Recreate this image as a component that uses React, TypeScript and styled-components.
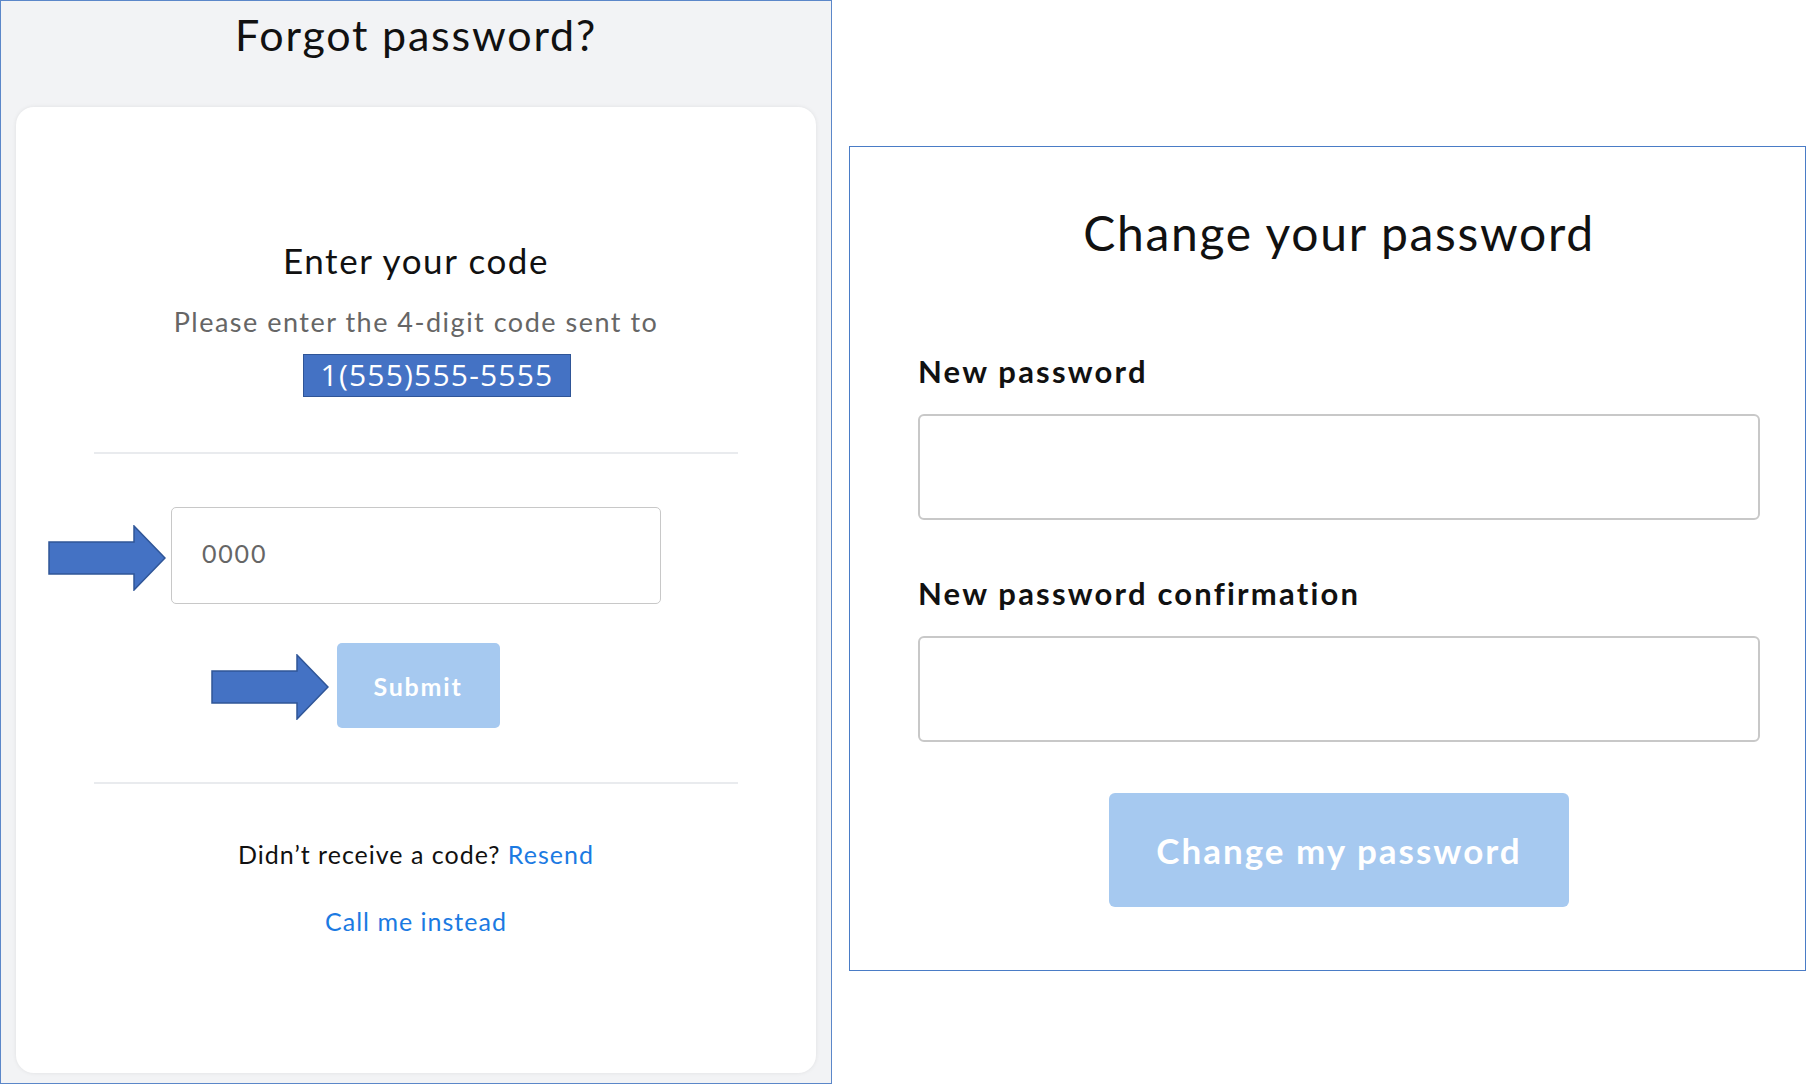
import React from "react";
import styled, { createGlobalStyle } from "styled-components";

const GlobalStyle = createGlobalStyle`
  body {
    margin: 0;
    background: #ffffff;
    font-family: "Lato", "Noto Sans", sans-serif;
  }
`;

const Arrow: React.FC = () => (
  <svg width="118" height="66" viewBox="0 0 118 66">
    <path
      d="M1 17 H86 V1 L117 33 L86 65 V49 H1 Z"
      fill="#4472c4"
      stroke="#2f5597"
      strokeWidth="1.5"
    />
  </svg>
);

const App: React.FC = () => {
  return (
    <>
      <GlobalStyle />
      <Page>
        <ForgotPanel>
          <PanelTitle>Forgot password?</PanelTitle>
          <Card>
            <CardHeading>Enter your code</CardHeading>
            <Subtitle>Please enter the 4-digit code sent to</Subtitle>
            <PhoneBox>1(555)555-5555</PhoneBox>
            <Divider top={55} />
            <Annotated top={53}>
              <CodeInput placeholder="0000" />
              <ArrowMark left={-123} top={18}>
                <Arrow />
              </ArrowMark>
            </Annotated>
            <Annotated top={39}>
              <SubmitButton>Submit</SubmitButton>
              <ArrowMark left={-122} top={11}>
                <Arrow />
              </ArrowMark>
            </Annotated>
            <Divider top={54} />
            <HelpLine top={55}>
              Didn’t receive a code? <LinkText>Resend</LinkText>
            </HelpLine>
            <HelpLine top={37}>
              <LinkText>Call me instead</LinkText>
            </HelpLine>
          </Card>
        </ForgotPanel>

        <ChangePanel>
          <ChangeTitle>Change your password</ChangeTitle>
          <FieldLabel top={93}>New password</FieldLabel>
          <PasswordInput type="password" />
          <FieldLabel top={56}>New password confirmation</FieldLabel>
          <PasswordInput type="password" />
          <ChangeButton>Change my password</ChangeButton>
        </ChangePanel>
      </Page>
    </>
  );
};

export default App;

const Page = styled.div`
  display: flex;
  align-items: flex-start;
  gap: 17px;
  width: 1806px;
  height: 1084px;
`;

const ForgotPanel = styled.div`
  box-sizing: border-box;
  width: 832px;
  height: 1084px;
  background: #f2f3f5;
  border: 1.5px solid #5b87c9;
  display: flex;
  flex-direction: column;
  align-items: stretch;
  padding: 0 15px 10px 15px;
`;

const PanelTitle = styled.h1`
  margin: 9px 0 0 0;
  font-size: 43px;
  line-height: 50px;
  letter-spacing: 1.8px;
  font-weight: 400;
  color: #111;
  text-align: center;
`;

const Card = styled.div`
  margin-top: 47px;
  flex: 1;
  background: #ffffff;
  border-radius: 18px;
  box-shadow: 0 0 4px rgba(0, 0, 0, 0.08);
  display: flex;
  flex-direction: column;
  align-items: center;
  padding-top: 133px;
`;

const CardHeading = styled.h2`
  margin: 0;
  font-size: 35px;
  line-height: 40px;
  letter-spacing: 1.6px;
  font-weight: 400;
  color: #111;
`;

const Subtitle = styled.p`
  margin: 26px 0 0 0;
  font-size: 27px;
  line-height: 32px;
  letter-spacing: 1.5px;
  color: #666;
`;

const PhoneBox = styled.div`
  margin: 16px 0 0 42px;
  box-sizing: border-box;
  width: 268px;
  height: 43px;
  background: #4472c4;
  border: 1.5px solid #2f5597;
  color: #fff;
  font-family: "Open Sans", "Liberation Sans", sans-serif;
  font-size: 30px;
  line-height: 40px;
  letter-spacing: 1.2px;
  text-align: center;
`;

const Divider = styled.hr<{ top: number }>`
  margin: ${(p) => p.top}px 0 0 0;
  width: 644px;
  height: 2px;
  border: none;
  background: #e9ebee;
`;

const Annotated = styled.div<{ top: number }>`
  position: relative;
  margin-top: ${(p) => p.top}px;
  display: flex;
`;

const ArrowMark = styled.div<{ left: number; top: number }>`
  position: absolute;
  left: ${(p) => p.left}px;
  top: ${(p) => p.top}px;
  line-height: 0;
`;

const CodeInput = styled.input`
  box-sizing: border-box;
  width: 490px;
  height: 97px;
  border: 1.5px solid #c8c8c8;
  border-radius: 5px;
  padding: 0 0 6px 30px;
  font-family: "Lato", sans-serif;
  font-size: 25px;
  letter-spacing: 1.8px;
  color: #333;
  outline: none;
  &::placeholder {
    color: #666;
  }
`;

const SubmitButton = styled.button`
  margin-left: 4px;
  width: 163px;
  height: 85px;
  border: none;
  border-radius: 5px;
  background: #a6c9f0;
  color: #fff;
  font-family: "Lato", sans-serif;
  font-weight: 700;
  font-size: 25px;
  letter-spacing: 1.8px;
  cursor: pointer;
`;

const HelpLine = styled.p<{ top: number }>`
  margin: ${(p) => p.top}px 0 0 0;
  font-size: 25px;
  line-height: 30px;
  letter-spacing: 1px;
  color: #111;
`;

const LinkText = styled.a`
  color: #1b7ae2;
  cursor: pointer;
`;

const ChangePanel = styled.div`
  box-sizing: border-box;
  margin-top: 146px;
  width: 957px;
  height: 825px;
  background: #fff;
  border: 1.5px solid #4a7cc6;
  display: flex;
  flex-direction: column;
  align-items: stretch;
  padding: 58px 45px 0 68px;
`;

const ChangeTitle = styled.h1`
  margin: 0;
  font-size: 48px;
  line-height: 56px;
  letter-spacing: 1.7px;
  font-weight: 400;
  color: #111;
  text-align: center;
`;

const FieldLabel = styled.label<{ top: number }>`
  margin-top: ${(p) => p.top}px;
  font-size: 31px;
  line-height: 34px;
  letter-spacing: 2.2px;
  font-weight: 700;
  color: #111;
`;

const PasswordInput = styled.input`
  margin-top: 26px;
  box-sizing: border-box;
  width: 100%;
  height: 106px;
  border: 2px solid #c8c8c8;
  border-radius: 6px;
  outline: none;
`;

const ChangeButton = styled.button`
  align-self: center;
  margin-top: 51px;
  width: 460px;
  height: 114px;
  border: none;
  border-radius: 6px;
  background: #a6c9f0;
  color: #fff;
  font-family: "Lato", sans-serif;
  font-weight: 700;
  font-size: 35px;
  letter-spacing: 2px;
  cursor: pointer;
`;
